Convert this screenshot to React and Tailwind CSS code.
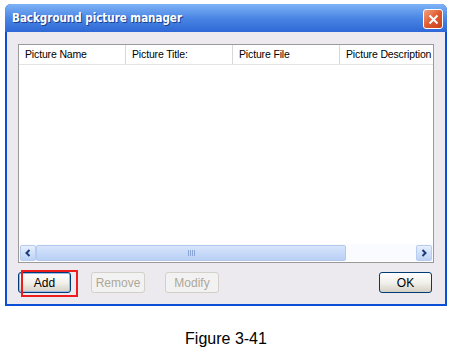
import React from "react";

const cols = ["Picture Name", "Picture Title:", "Picture File", "Picture Description"];

const XpButton = ({ children, disabled, className = "" }) => (
  <div
    className={
      "h-[21px] flex items-center justify-center rounded-[3px] border text-[12px] " +
      (disabled
        ? "border-[#d2d0c8] text-[#aca899] bg-[#f3f2f2] "
        : "border-[#003c74] text-black bg-gradient-to-b from-white via-[#f2f1ec] to-[#d6d0c5] ") +
      className
    }
  >
    {children}
  </div>
);

const Arrow = ({ dir }) => (
  <div className="w-[16px] h-[16px] rounded-[2px] border border-[#b8ccf0] bg-gradient-to-b from-[#e6effe] to-[#bcd2f5] flex items-center justify-center">
    <svg width="8" height="8" viewBox="0 0 8 8">
      <path
        d={dir === "left" ? "M5.5 1 L2.5 4 L5.5 7" : "M2.5 1 L5.5 4 L2.5 7"}
        stroke="#1c3a78"
        strokeWidth="2"
        fill="none"
      />
    </svg>
  </div>
);

export default function App() {
  return (
    <div className="w-[451px] h-[355px] bg-white font-['Liberation_Sans',Arial,sans-serif] pt-[4px] pl-[5px]">
      <div className="w-[442px] h-[302px] flex flex-col bg-[#0b4fd8] rounded-t-[6px] px-[2px] pb-[2px]">
        {/* title bar */}
        <div className="h-[28px] flex items-center justify-between rounded-t-[6px] bg-gradient-to-b from-[#7fb2f6] via-[#4a86e4] to-[#2e68d6] -mx-[2px] pl-[7px] pr-[4px] pt-[2px]">
          <span className="text-white font-bold text-[11.5px] font-['DejaVu_Sans_Condensed','DejaVu_Sans',sans-serif] [text-shadow:1px_1px_0_#1a3f8f]">
            Background picture manager
          </span>
          <div className="w-[20px] h-[20px] rounded-[3px] border border-white bg-gradient-to-br from-[#f0a080] via-[#e05a30] to-[#c84018] flex items-center justify-center">
            <svg width="11" height="11" viewBox="0 0 11 11">
              <path d="M1.5 1.5 L9.5 9.5 M9.5 1.5 L1.5 9.5" stroke="white" strokeWidth="2" />
            </svg>
          </div>
        </div>

        {/* body */}
        <div className="flex-1 bg-[#eceaee] flex flex-col pt-[12px] px-[11px]">
          <div className="h-[219px] border border-[#9a9a9a] bg-white flex flex-col">
            <div className="h-[20px] flex text-[10.5px] tracking-[-0.15px] text-black border-b border-[#e5e5e5]">
              {cols.map((c, i) => (
                <div
                  key={c}
                  className={
                    "h-full flex items-center pl-[6px] whitespace-nowrap overflow-hidden " +
                    (i < 3 ? "w-[107px] border-r border-[#d8d8d8]" : "flex-1")
                  }
                >
                  {c}
                </div>
              ))}
            </div>
            <div className="flex-1" />
            <div className="h-[17px] flex items-center px-[1px] bg-[#fafbff] mb-[1px]">
              <Arrow dir="left" />
              <div className="w-[310px] h-[16px] rounded-[2px] border border-[#b3c8ec] bg-gradient-to-b from-[#d7e5fc] to-[#b8cff5] flex items-center justify-center">
                <div className="flex gap-[1px]">
                  <div className="w-[1px] h-[6px] bg-[#8ba6d6]" />
                  <div className="w-[1px] h-[6px] bg-[#8ba6d6]" />
                  <div className="w-[1px] h-[6px] bg-[#8ba6d6]" />
                  <div className="w-[1px] h-[6px] bg-[#8ba6d6]" />
                </div>
              </div>
              <div className="flex-1" />
              <Arrow dir="right" />
            </div>
          </div>

          <div className="flex items-center mt-[9px]">
            <div className="relative">
              <XpButton className="w-[53px] border-[#2d5cb8] shadow-[inset_0_0_0_1px_#9cb9ec]">Add</XpButton>
              <div className="absolute left-[3px] top-[-2px] w-[57px] h-[27px] border-2 border-[#ee1c1c]" />
            </div>
            <XpButton disabled className="w-[54px] ml-[20px]">Remove</XpButton>
            <XpButton disabled className="w-[54px] ml-[20px]">Modify</XpButton>
            <div className="flex-1" />
            <XpButton className="w-[53px] mr-[2px]">OK</XpButton>
          </div>
        </div>
      </div>

      <div className="w-[442px] text-center text-[16px] text-black mt-[21px]">Figure 3-41</div>
    </div>
  );
}
